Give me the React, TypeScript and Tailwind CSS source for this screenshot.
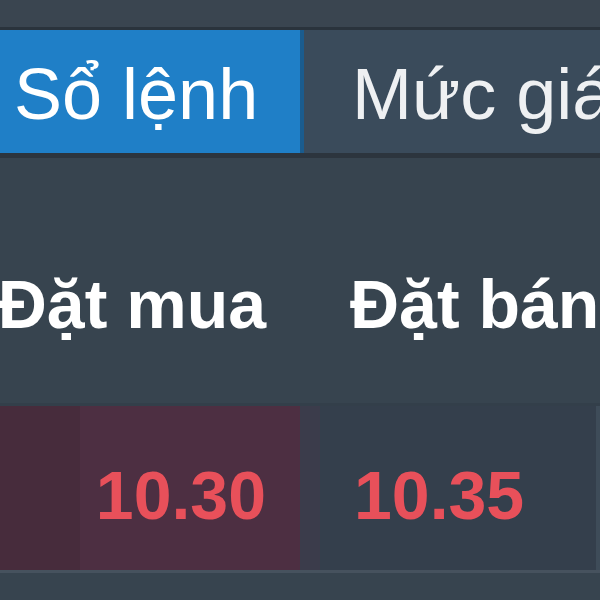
import React from 'react';

const font = { fontFamily: '"Liberation Sans", Arial, sans-serif' };

export default function App() {
  return (
    <div className="w-[600px] h-[600px] overflow-hidden bg-[#37444f]" style={font}>
      {/* top strip */}
      <div className="h-[30px] bg-[#3a4550] border-b-[3px] border-[#2a333c]" />

      {/* tabs */}
      <div className="flex h-[128px] border-b-[5px] border-[#2c353e]">
        <div className="w-[300px] shrink-0 bg-[#1f7fc7] flex items-center pl-[14px] pt-[4px] text-[72px] text-white whitespace-nowrap">
          Sổ lệnh
        </div>
        <div className="w-[4px] bg-[#1a5c8e]" />
        <div className="flex-1 bg-[#3a4b5b] flex items-center pl-[48px] pt-[4px] text-[72px] text-[#eef0f2] whitespace-nowrap overflow-hidden">
          Mức giá
        </div>
      </div>

      {/* header row */}
      <div className="flex h-[245px] items-center pt-[46px]">
        <div className="w-[300px] shrink-0 flex justify-end pr-[34px] text-[68px] font-bold text-white whitespace-nowrap">
          Đặt mua
        </div>
        <div className="flex-1 pl-[50px] text-[68px] font-bold text-white whitespace-nowrap overflow-hidden">
          Đặt bán
        </div>
      </div>

      {/* data row */}
      <div className="flex h-[170px] border-t-[3px] border-[#333f4a] border-b-[3px] border-b-[#46525e]">
        <div className="w-[300px] shrink-0 flex bg-[#472e3d]">
          <div className="w-[80px] bg-[#472c3c]" />
          <div className="flex-1 bg-[#4d2f42] flex items-center justify-end pr-[34px] pt-[14px] text-[68px] font-bold text-[#e8505a]">
            10.30
          </div>
        </div>
        <div className="w-[20px] bg-[#3b3c4b]" />
        <div className="flex-1 flex items-center pl-[34px] pt-[14px] text-[68px] font-bold text-[#e8505a] bg-[#343f4c] border-r-[4px] border-[#3e4c59]">
          10.35
        </div>
      </div>
    </div>
  );
}
